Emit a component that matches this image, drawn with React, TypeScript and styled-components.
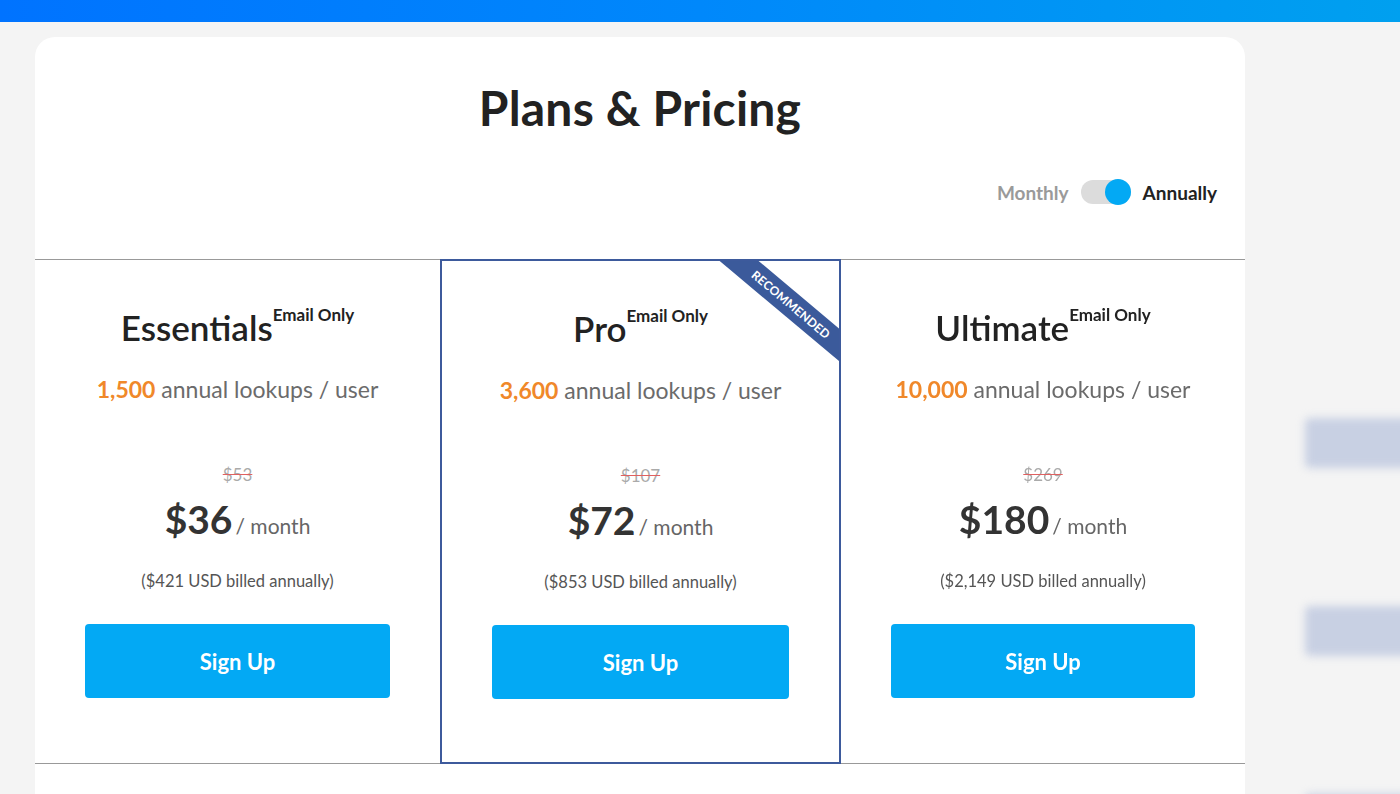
import { createGlobalStyle } from "styled-components";
import styled from "styled-components";

const GlobalStyle = createGlobalStyle`
  html, body {
    margin: 0;
    padding: 0;
    background: #f4f4f4;
    font-family: "Lato", "Noto Sans", sans-serif;
    overflow: hidden;
  }
`;

const TopBar = styled.div`
  height: 22px;
  background: linear-gradient(90deg, #0073ff 0%, #0088fb 50%, #00a0ef 100%);
  position: relative;
  z-index: 2;
`;

// blurred page that sits behind the modal
const Backdrop = styled.div`
  position: fixed;
  inset: 22px 0 0 0;
  filter: blur(4px);
  display: flex;
  flex-direction: column;
  align-items: flex-end;
  padding-top: 396px;
  gap: 138px;
  z-index: 0;
`;

const GhostButton = styled.div`
  flex-shrink: 0;
  width: 110px;
  height: 50px;
  border-radius: 5px;
  background: #c8d0e3;
  margin-right: -15px;
`;

const Page = styled.div`
  position: relative;
  z-index: 1;
  padding: 15px 0 0 35px;
`;

const Card = styled.div`
  width: 1210px;
  height: 800px;
  background: #fff;
  border-radius: 20px 20px 0 0;
`;

const Title = styled.h1`
  margin: 0;
  padding-top: 43px;
  text-align: center;
  font-size: 48px;
  line-height: 56px;
  font-weight: 700;
  color: #222;
  letter-spacing: 0.2px;
`;

const ToggleRow = styled.div`
  display: flex;
  justify-content: flex-end;
  align-items: center;
  gap: 12px;
  padding: 41px 28px 0 0;
  height: 30px;
`;

const ToggleLabel = styled.span<{ $active?: boolean }>`
  font-size: 19px;
  font-weight: 700;
  color: ${(p) => (p.$active ? "#222" : "#9a9a9a")};
`;

const Track = styled.div`
  position: relative;
  width: 50px;
  height: 24px;
  border-radius: 12px;
  background: #dcdcdc;
`;

const Knob = styled.div`
  position: absolute;
  right: 0;
  top: -1px;
  width: 26px;
  height: 26px;
  border-radius: 50%;
  background: #03a9f4;
`;

const Plans = styled.div`
  margin-top: 52px;
  display: grid;
  grid-template-columns: 405px 401px 404px;
  border-top: 1px solid #999;
  border-bottom: 1px solid #999;
`;

const Plan = styled.div<{ $featured?: boolean }>`
  position: relative;
  display: flex;
  flex-direction: column;
  align-items: center;
  padding: 45px 50px 63px;
  ${(p) =>
    p.$featured &&
    `
    border: 2px solid #3d5a9c;
    margin: -1px 0;
    padding-top: 45px;
  `}
`;

const Ribbon = styled.div`
  position: absolute;
  top: 0;
  right: 0;
  width: 120px;
  height: 110px;
  overflow: hidden;
`;

const RibbonBand = styled.div`
  position: absolute;
  left: -28px;
  top: 31px;
  width: 200px;
  height: 25px;
  background: #3b5a9b;
  transform: rotate(40deg);
  color: #fff;
  font-size: 12px;
  font-weight: 700;
  letter-spacing: 0.2px;
  display: flex;
  align-items: center;
  justify-content: center;
`;

const Name = styled.div`
  font-size: 35px;
  line-height: 44px;
  font-weight: 600;
  color: #222;
  white-space: nowrap;
`;

const Sup = styled.span`
  font-size: 17px;
  font-weight: 700;
  vertical-align: 20px;
  line-height: 0;
`;

const Lookups = styled.div`
  margin-top: 26px;
  font-size: 23px;
  color: #6b6b6b;
  white-space: nowrap;
`;

const Count = styled.span`
  color: #f0882a;
  font-weight: 700;
`;

const OldPrice = styled.div`
  margin-top: 61px;
  font-size: 17px;
  color: #aaa;
  text-decoration: line-through;
  text-decoration-color: #e06060;
`;

const Price = styled.div`
  margin-top: 11px;
  display: flex;
  align-items: baseline;
  gap: 3px;
`;

const Amount = styled.span`
  font-size: 39px;
  font-weight: 700;
  color: #333;
`;

const Per = styled.span`
  font-size: 21px;
  color: #666;
`;

const Billed = styled.div`
  margin-top: 29px;
  font-size: 16.5px;
  color: #555;
`;

const SignUp = styled.button`
  margin-top: 33px;
  width: 100%;
  height: 74px;
  border: none;
  border-radius: 4px;
  background: #03a9f4;
  color: #fff;
  font-family: inherit;
  font-size: 22px;
  font-weight: 700;
  cursor: pointer;
`;

type PlanData = {
  name: string;
  lookups: string;
  oldPrice: string;
  price: string;
  billed: string;
  featured?: boolean;
};

const plans: PlanData[] = [
  { name: "Essentials", lookups: "1,500", oldPrice: "$53", price: "$36", billed: "$421" },
  { name: "Pro", lookups: "3,600", oldPrice: "$107", price: "$72", billed: "$853", featured: true },
  { name: "Ultimate", lookups: "10,000", oldPrice: "$269", price: "$180", billed: "$2,149" },
];

export default function App() {
  return (
    <>
      <GlobalStyle />
      <TopBar />
      <Backdrop>
        <GhostButton />
        <GhostButton />
        <GhostButton />
      </Backdrop>
      <Page>
        <Card>
          <Title>Plans &amp; Pricing</Title>
          <ToggleRow>
            <ToggleLabel>Monthly</ToggleLabel>
            <Track>
              <Knob />
            </Track>
            <ToggleLabel $active>Annually</ToggleLabel>
          </ToggleRow>
          <Plans>
            {plans.map((plan) => (
              <Plan key={plan.name} $featured={plan.featured}>
                {plan.featured && (
                  <Ribbon>
                    <RibbonBand>RECOMMENDED</RibbonBand>
                  </Ribbon>
                )}
                <Name>
                  {plan.name}
                  <Sup>Email Only</Sup>
                </Name>
                <Lookups>
                  <Count>{plan.lookups}</Count> annual lookups / user
                </Lookups>
                <OldPrice>{plan.oldPrice}</OldPrice>
                <Price>
                  <Amount>{plan.price}</Amount>
                  <Per>/ month</Per>
                </Price>
                <Billed>({plan.billed} USD billed annually)</Billed>
                <SignUp>Sign Up</SignUp>
              </Plan>
            ))}
          </Plans>
        </Card>
      </Page>
    </>
  );
}
